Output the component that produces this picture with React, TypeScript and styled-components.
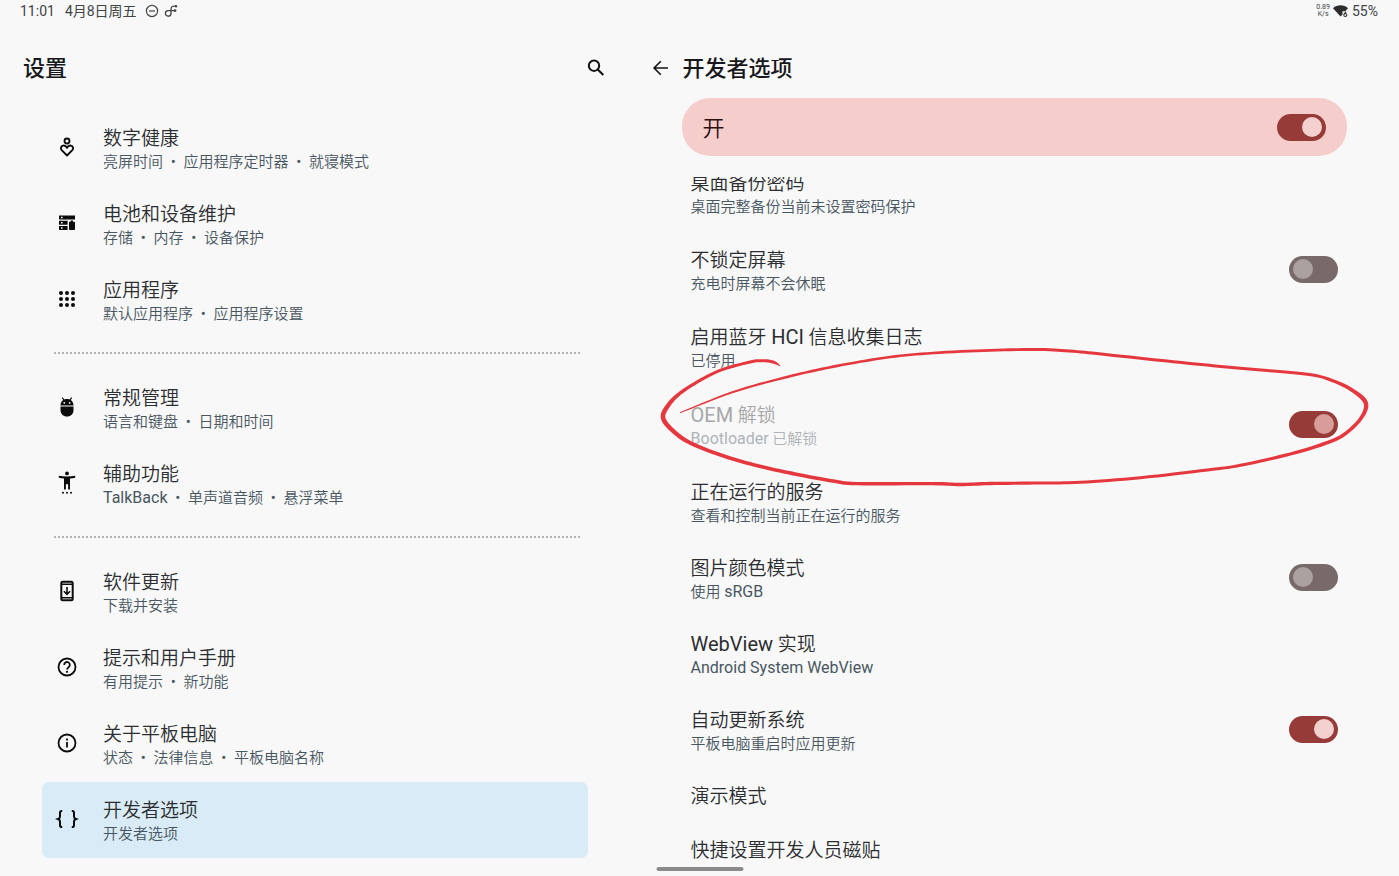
import React from "react";
import styled, { createGlobalStyle, css } from "styled-components";

const GlobalStyle = createGlobalStyle`
  *, *::before, *::after { box-sizing: border-box; }
  body {
    margin: 0;
    background: #f8f8f8;
    color: #2b2d30;
    font-family: Roboto, "Noto Sans CJK SC", sans-serif;
    font-weight: 350;
  }
  h1, h2, p { margin: 0; }
`;

const Page = styled.div`
  position: relative;
  display: flex;
  flex-direction: column;
  height: 100vh;
  overflow: hidden;
`;

const StatusBar = styled.div`
  display: flex;
  align-items: center;
  justify-content: space-between;
  height: 22px;
  flex: none;
  padding: 0 21px 0 20px;
  font-size: 14px;
  line-height: 22px;
  font-weight: 400;
  color: #414345;
`;

const StatusGroup = styled.div<{ $gap: number }>`
  display: flex;
  align-items: center;
  gap: ${(p) => p.$gap}px;
`;

const NetSpeed = styled.span`
  display: flex;
  flex-direction: column;
  align-items: center;
  font-size: 7px;
  line-height: 7px;
`;

const Panes = styled.main`
  display: grid;
  grid-template-columns: 9fr 11fr;
  flex: 1;
  min-height: 0;
`;

const Pane = styled.section`
  display: flex;
  flex-direction: column;
  min-width: 0;
  min-height: 0;
`;

const PaneHeader = styled.header<{ $detail?: boolean }>`
  display: flex;
  align-items: center;
  flex: none;
  height: 76px;
  padding: ${(p) => (p.$detail ? "16px 52px 0 20px" : "16px 24px 0 23px")};
  justify-content: ${(p) => (p.$detail ? "flex-start" : "space-between")};
  gap: 12px;
`;

const Heading = styled.h1`
  padding-top: 1px;
  font-size: 22px;
  line-height: 32px;
  font-weight: 500;
  color: #18181c;
`;

const IconButton = styled.button`
  display: flex;
  padding: 0;
  border: 0;
  background: none;
  color: #111;
  cursor: pointer;
`;

const Menu = styled.nav`
  display: flex;
  flex-direction: column;
  padding: 12px 42px 0;
`;

const MenuRow = styled.a<{ $active?: boolean }>`
  display: flex;
  align-items: center;
  gap: 24px;
  min-height: 76px;
  padding: 0 12px 2px 13px;
  border-radius: 7px;
  color: inherit;
  text-decoration: none;
  ${(p) => p.$active && css`background: #d8ebf6;`}
`;

const IconSvg = styled.svg`
  flex: none;
  color: #0c0c0c;
`;

const Texts = styled.span`
  display: flex;
  flex-direction: column;
  padding-top: 4px;
`;

const Latin = styled.span`
  font-weight: 400;
`;

const Title = styled.span`
  font-size: 19px;
  line-height: 25px;
  ${Latin} { font-size: 20px; }
`;

const Summary = styled.span`
  font-size: 15px;
  line-height: 22px;
  color: #485662;
  ${Latin} { font-size: 16px; }
`;

const Bullet = styled.span`
  margin: 0 4px;
  font-weight: 400;
`;

const Divider = styled.hr`
  width: calc(100% - 20px);
  height: 2px;
  margin: 14px 8px 16px 12px;
  border: 0;
  background: repeating-linear-gradient(90deg, #b2b2b2 0 2px, transparent 2px 4px);
`;

const Banner = styled.label`
  display: flex;
  align-items: center;
  justify-content: space-between;
  flex: none;
  height: 58px;
  margin: 0 52px;
  padding: 0 21px;
  border-radius: 28px;
  background: #f5cecb;
  color: #2b1010;
`;

const BannerText = styled.span`
  padding-top: 3px;
  font-size: 22px;
  line-height: 32px;
`;

const Switch = styled.input`
  appearance: none;
  flex: none;
  width: 49px;
  height: 27px;
  margin: 0;
  padding: 3px 4px;
  border-radius: 14px;
  background: #786a69;
  &::before {
    content: "";
    display: block;
    width: 20px;
    height: 20px;
    border-radius: 50%;
    background: #aba1a0;
  }
  &:checked { background: #963b38; }
  &:checked::before { margin-left: auto; background: #f2d1cf; }
  &:checked:disabled::before { background: #d89d9a; }
`;

const OptionsViewport = styled.div`
  flex: 1;
  min-height: 0;
  margin-top: 21px;
  overflow: hidden;
`;

const Options = styled.div`
  display: flex;
  flex-direction: column;
  margin-top: -22px;
  padding: 0 61px;
`;

const OptionRow = styled.label<{ $size: number; $disabled?: boolean }>`
  position: relative;
  display: flex;
  align-items: center;
  justify-content: space-between;
  height: ${(p) => p.$size}px;
  padding-bottom: ${(p) => (p.$size > 60 ? 3 : 4)}px;
  ${(p) =>
    p.$disabled &&
    css`
      ${Title} { color: #a6a7a9; }
      ${Summary} { color: #afb4b8; }
    `}
`;

const InkSvg = styled.svg`
  position: absolute;
  z-index: 1;
  left: -61px;
  top: -47px;
  width: calc(100% + 93px);
  height: 160px;
  pointer-events: none;
`;

const HomeBar = styled.div`
  position: absolute;
  left: 50%;
  bottom: 5px;
  width: 87px;
  height: 4px;
  border-radius: 2px;
  background: #8a8a8a;
  transform: translateX(-50%);
`;

const Icon = ({ children }: { children: React.ReactNode }) => (
  <IconSvg width="24" height="24" viewBox="0 0 24 24" fill="none" stroke="currentColor" strokeWidth="2" aria-hidden="true">
    {children}
  </IconSvg>
);

const icons: Record<string, React.ReactNode> = {
  wellbeing: (
    <Icon>
      <circle cx="12" cy="6" r="2.5" strokeWidth="1.8" />
      <path d="M12 20.500 6.700 15.200C5.200 13.600 5.900 11 8.100 10.600c1.700-.3 3.100.6 3.900 2.200.8-1.600 2.200-2.500 3.900-2.200 2.200.4 2.900 3 1.400 4.600z" strokeWidth="1.900" strokeLinejoin="round" />
    </Icon>
  ),
  storage: (
    <Icon>
      <path fill="currentColor" stroke="none" fillRule="evenodd" d="M4 4.500h16v4H4zM6 5.700v1.600h1.600V5.700zM4 9.800h8.600v3.900H4zM6 11v1.600h1.600V11zM4 15h8.600v4H4zM6 16.200v1.600h1.600v-1.600zM15.600 9.500h2.400v1.200h1.200c.5 0 .8.300.8.800V18.200c0 .500-.300.800-.800.800h-4.400c-.500 0-.800-.300-.800-.800v-6.700c0-.500.300-.800.800-.800h.800z" />
    </Icon>
  ),
  apps: (
    <Icon>
      {[6, 12, 18].map((y) =>
        [6, 12, 18].map((x) => <circle key={`${x}-${y}`} cx={x} cy={y} r="2" fill="currentColor" stroke="none" />)
      )}
    </Icon>
  ),
  general: (
    <Icon>
      <path d="M7.300 2.600 9.300 5.500M16.700 2.600 14.700 5.500" strokeWidth="1.200" />
      <path fill="currentColor" stroke="none" fillRule="evenodd" d="M5.500 10.400C5.500 6.600 8.200 4 12 4s6.500 2.600 6.500 6.400zM9.300 6.900a.9.900 0 1 0 0 1.800.9.900 0 0 0 0-1.800zM14.700 6.900a.9.900 0 1 0 0 1.800.9.900 0 0 0 0-1.800zM5.500 11.500h13v3.500c0 3.900-2.700 6.500-6.500 6.500S5.500 18.900 5.500 15z" />
    </Icon>
  ),
  accessibility: (
    <Icon>
      <g fill="currentColor" stroke="none">
        <circle cx="12" cy="2.400" r="1.900" />
        <path d="M3.800 4.800c5.400 1 11 1 16.400 0v1.900c-1.800.4-3.500.6-5.200.8V18.500h-1.900v-5.300h-2.200v5.300H9V7.500c-1.700-.2-3.400-.4-5.200-.8z" />
        <circle cx="8" cy="21.800" r="1" /><circle cx="12" cy="21.800" r="1" /><circle cx="16" cy="21.800" r="1" />
      </g>
    </Icon>
  ),
  update: (
    <Icon>
      <rect x="6.300" y="2.800" width="11.400" height="18.400" rx="1.500" />
      <path d="M6 5.300h12M6 18.700h12" strokeWidth="1.600" />
      <path d="M12 8v7.200M8.900 12.300 12 15.400l3.100-3.100" strokeWidth="1.600" />
    </Icon>
  ),
  help: (
    <Icon>
      <circle cx="12" cy="12" r="8.500" strokeWidth="1.800" />
      <path d="M9.200 9.900a2.800 2.800 0 1 1 4.700 2c-1.100 1-1.900 1.500-1.900 2.700" strokeWidth="1.800" />
      <circle cx="12" cy="16.800" r="1.100" fill="currentColor" stroke="none" />
    </Icon>
  ),
  about: (
    <Icon>
      <circle cx="12" cy="12" r="8.500" strokeWidth="1.800" />
      <path d="M12 11v5.500M12 7.500v1.900" strokeWidth="1.800" />
    </Icon>
  ),
  developer: (
    <Icon>
      <path d="M7.200 3.900H6.600C5.500 3.900 5 4.600 5 5.700v3.700c0 1.400-.5 2.100-2 2.600 1.500.5 2 1.200 2 2.600v3.700c0 1.100.5 1.800 1.600 1.800h.6M16.800 3.900h.6c1.100 0 1.600.7 1.600 1.800v3.700c0 1.400.5 2.100 2 2.600-1.500.5-2 1.200-2 2.600v3.700c0 1.100-.5 1.800-1.600 1.800h-.6" />
    </Icon>
  ),
};

interface MenuItem { icon: string; title: string; summary: string[]; active?: boolean }

const menuGroups: MenuItem[][] = [
  [
    { icon: "wellbeing", title: "数字健康", summary: ["亮屏时间", "应用程序定时器", "就寝模式"] },
    { icon: "storage", title: "电池和设备维护", summary: ["存储", "内存", "设备保护"] },
    { icon: "apps", title: "应用程序", summary: ["默认应用程序", "应用程序设置"] },
  ],
  [
    { icon: "general", title: "常规管理", summary: ["语言和键盘", "日期和时间"] },
    { icon: "accessibility", title: "辅助功能", summary: ["TalkBack", "单声道音频", "悬浮菜单"] },
  ],
  [
    { icon: "update", title: "软件更新", summary: ["下载并安装"] },
    { icon: "help", title: "提示和用户手册", summary: ["有用提示", "新功能"] },
    { icon: "about", title: "关于平板电脑", summary: ["状态", "法律信息", "平板电脑名称"] },
    { icon: "developer", title: "开发者选项", summary: ["开发者选项"], active: true },
  ],
];

interface Option {
  title: string; summary?: string; size: number; on?: boolean; disabled?: boolean; circled?: boolean;
}

const options: Option[] = [
  { title: "桌面备份密码", summary: "桌面完整备份当前未设置密码保护", size: 77 },
  { title: "不锁定屏幕", summary: "充电时屏幕不会休眠", size: 77, on: false },
  { title: "启用蓝牙 HCI 信息收集日志", summary: "已停用", size: 78 },
  { title: "OEM 解锁", summary: "Bootloader 已解锁", size: 78, on: true, disabled: true, circled: true },
  { title: "正在运行的服务", summary: "查看和控制当前正在运行的服务", size: 76 },
  { title: "图片颜色模式", summary: "使用 sRGB", size: 76, on: false },
  { title: "WebView 实现", summary: "Android System WebView", size: 76 },
  { title: "自动更新系统", summary: "平板电脑重启时应用更新", size: 76, on: true },
  { title: "演示模式", size: 54 },
  { title: "快捷设置开发人员磁贴", size: 54 },
];

// Latin runs take a regular face beside the lighter Chinese text.
const Mixed = ({ text }: { text: string }) => (
  <span>
    {text.split(/([A-Za-z][A-Za-z ]*[A-Za-z])/).map((part, i) =>
      i % 2 ? <Latin key={i}>{part}</Latin> : part
    )}
  </span>
);

// Pen samples: x, y, pen width
type Sample = [number, number, number];
const inkSamples: Sample[] = [
  [680, 412.7, 1], [733, 392, 2], [783, 378, 2.4], [817, 370, 2.6], [850, 363.5, 2.6], [890, 357, 2.6],
  [933, 353, 2.6], [990, 350.3, 2.8], [1040, 349.5, 3], [1073, 351.3, 3], [1107, 354.7, 3], [1173, 361.7, 3],
  [1240, 368.3, 3], [1307, 374.3, 3], [1333, 381, 3.2], [1353, 391, 3.8], [1365.5, 403.5, 4.4],
  [1360, 419, 3.6], [1343, 435, 3.6], [1323, 444, 3.6], [1290, 454, 3.2], [1240, 465.3, 3], [1207, 470, 3],
  [1140, 477.7, 3], [1080, 482.3, 3], [1040, 483, 3], [990, 483.5, 3.4], [960, 484.5, 3.4], [933, 483.6, 3.4],
  [857, 483.6, 3.4], [833, 481, 3.6], [800, 475, 3.6], [767, 468, 3.6], [733, 459, 3.6], [700, 447.3, 3.8],
  [680, 436.7, 4.2], [663.8, 420, 4.6], [667, 407, 4.4], [683, 391, 3.4], [717, 371.7, 3], [750, 362, 3],
  [763, 360.7, 3], [773, 362, 3], [780, 365.7, 1],
];

function inkOutline(samples: Sample[]): string {
  const curve: Sample[] = [];
  const at = (i: number) => samples[Math.max(0, Math.min(samples.length - 1, i))];
  for (let i = 0; i < samples.length - 1; i++) {
    const [a, b, c, d] = [at(i - 1), at(i), at(i + 1), at(i + 2)];
    for (let s = 0; s < 8; s++) {
      const t = s / 8;
      curve.push([0, 1, 2].map((k) =>
        0.5 * (2 * b[k] + (c[k] - a[k]) * t + (2 * a[k] - 5 * b[k] + 4 * c[k] - d[k]) * t * t +
          (3 * b[k] - a[k] - 3 * c[k] + d[k]) * t * t * t)
      ) as Sample);
    }
  }
  curve.push(at(samples.length - 1));
  const side = (sign: number) =>
    curve.map(([x, y, w], i) => {
      const p = curve[Math.max(0, i - 1)];
      const n = curve[Math.min(curve.length - 1, i + 1)];
      const len = Math.hypot(n[0] - p[0], n[1] - p[1]) || 1;
      return `${(x - (sign * w * (n[1] - p[1])) / len / 2).toFixed(2)} ${(y + (sign * w * (n[0] - p[0])) / len / 2).toFixed(2)}`;
    });
  return `M${[...side(1), ...side(-1).reverse()].join("L")}Z`;
}

const inkPath = inkOutline(inkSamples);

const InkCircle = () => (
  <InkSvg viewBox="630 340 740 160" preserveAspectRatio="none" aria-hidden="true">
    <path d={inkPath} fill="#e5383e" />
  </InkSvg>
);

export default function App() {
  return (
    <Page>
      <GlobalStyle />
      <StatusBar>
        <StatusGroup $gap={8}>
          <StatusGroup $gap={10}>
            <span>11:01</span>
            <span>4月8日周五</span>
          </StatusGroup>
          <StatusGroup $gap={5}>
            <svg width="14" height="14" viewBox="0 0 14 14" fill="none" stroke="currentColor" strokeWidth="1.200" aria-hidden="true">
              <circle cx="7" cy="7" r="5.600" /><path d="M4 7h6" />
            </svg>
            <svg width="14" height="14" viewBox="0 0 14 14" fill="none" stroke="currentColor" strokeWidth="1.300" aria-hidden="true">
              <path d="M12 2.200C8.800 1.600 7 2.600 7 5v4.400a2.800 2.800 0 1 1-2.800-2.800H11" />
              <circle cx="12" cy="2.300" r="1.200" fill="currentColor" stroke="none" />
              <circle cx="11" cy="6.600" r="1.400" fill="currentColor" stroke="none" />
            </svg>
          </StatusGroup>
        </StatusGroup>
        <StatusGroup $gap={3}>
          <NetSpeed><span>0.89</span><span>K/s</span></NetSpeed>
          <svg width="16" height="14" viewBox="0 0 16 14" aria-hidden="true">
            <path d="M0 4.200C4.300.4 10.700.4 15 4.200L12.200 7.200H9.500V10.500L7.500 12.500z" fill="#2d2d2d" />
            <path d="M13 7.600 11.200 10.200" stroke="#2d2d2d" strokeWidth="1.100" />
            <circle cx="12.300" cy="11" r="1.500" fill="none" stroke="#2d2d2d" strokeWidth="1.100" />
          </svg>
          <span>55%</span>
        </StatusGroup>
      </StatusBar>
      <Panes>
        <Pane>
          <PaneHeader>
            <Heading>设置</Heading>
            <IconButton type="button" aria-label="搜索">
              <svg width="20" height="20" viewBox="0 0 20 20" fill="none" stroke="currentColor" strokeWidth="2" aria-hidden="true">
                <circle cx="8" cy="7.700" r="5.200" /><path d="M11.800 11.500 17.300 17" />
              </svg>
            </IconButton>
          </PaneHeader>
          <Menu>
            {menuGroups.map((group, g) => (
              <React.Fragment key={g}>
                {g > 0 && <Divider />}
                {group.map((item) => (
                  <MenuRow key={item.title} href="#" $active={item.active}>
                    {icons[item.icon]}
                    <Texts>
                      <Title>{item.title}</Title>
                      <Summary>
                        {item.summary.map((part, i) => (
                          <React.Fragment key={part}>
                            {i > 0 && <Bullet> • </Bullet>}
                            <Mixed text={part} />
                          </React.Fragment>
                        ))}
                      </Summary>
                    </Texts>
                  </MenuRow>
                ))}
              </React.Fragment>
            ))}
          </Menu>
        </Pane>
        <Pane>
          <PaneHeader $detail>
            <IconButton type="button" aria-label="返回">
              <svg width="21" height="20" viewBox="0 0 21 20" fill="none" stroke="currentColor" strokeWidth="1.600" aria-hidden="true">
                <path d="M18 10H4.500M10.800 3.300 4.100 10l6.700 6.700" />
              </svg>
            </IconButton>
            <Heading as="h2">开发者选项</Heading>
          </PaneHeader>
          <Banner>
            <BannerText>开</BannerText>
            <Switch type="checkbox" role="switch" defaultChecked />
          </Banner>
          <OptionsViewport>
            <Options>
              {options.map((o) => (
                <OptionRow key={o.title} as={o.on === undefined ? "div" : "label"} $size={o.size} $disabled={o.disabled}>
                  <Texts>
                    <Title><Mixed text={o.title} /></Title>
                    {o.summary && <Summary><Mixed text={o.summary} /></Summary>}
                  </Texts>
                  {o.on !== undefined && (
                    <Switch type="checkbox" role="switch" defaultChecked={o.on} disabled={o.disabled} />
                  )}
                  {o.circled && <InkCircle />}
                </OptionRow>
              ))}
            </Options>
          </OptionsViewport>
        </Pane>
      </Panes>
      <HomeBar />
    </Page>
  );
}
